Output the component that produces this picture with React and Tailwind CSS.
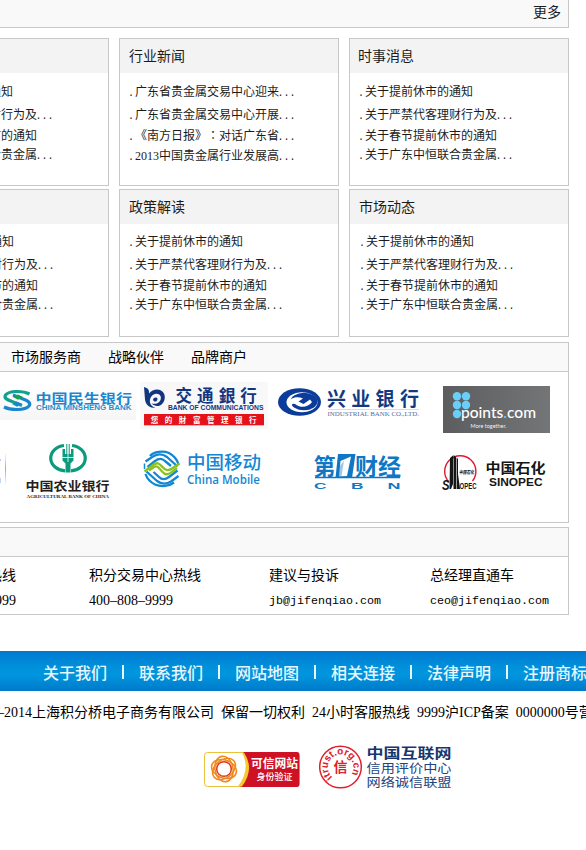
import React from "react";

const CJK = '"Liberation Sans","Noto Sans CJK SC",sans-serif';

const notices = [
  { text: "关于提前休市的通知" },
  { text: "关于严禁代客理财行为及", more: true },
  { text: "关于春节提前休市的通知" },
  { text: "关于广东中恒联合贵金属", more: true },
];

const industry = [
  { text: "广东省贵金属交易中心迎来", more: true },
  { text: "广东省贵金属交易中心开展", more: true },
  {
    text: (
      <>
        《南方日报》
        <span className="inline-block w-3 font-['Noto_Sans_CJK_TC',sans-serif]" lang="zh-Hant">：</span>
        对话广东省
      </>
    ),
    more: true,
  },
  {
    text: (
      <>
        <span className="font-['Liberation_Serif',serif]">2013</span>中国贵金属行业发展高
      </>
    ),
    more: true,
  },
];

const rowGaps = ["mt-[7px]", "mt-[3px]", "mt-px", "-mt-px"];

function Dots({ n, className = "" }) {
  return (
    <span className={`font-['Liberation_Mono',monospace] text-[10px] ${className}`}>{".".repeat(n)}</span>
  );
}

function Card({ title, items, inset, titleInset = "pl-[9px]", last = "-mt-px", up = false }) {
  return (
    <section className="h-[148px] w-[220px] shrink-0 border border-[#c8c8c8] bg-white text-[#1c1c1c]">
      <h2 className={`h-[34px] bg-[#f3f3f3] text-sm leading-[33px] ${titleInset}`}>{title}</h2>
      <ul className={`${inset} ${up ? "-mt-px" : ""} flex flex-col pt-px text-xs`}>
        {items.map((item, i) => (
          <li key={i} className={`h-5 leading-5 whitespace-nowrap ${i === 3 ? last : rowGaps[i]}`}>
            <Dots n={1} className="-ml-px mr-px" />
            {item.text}
            {item.more && <Dots n={3} className="-ml-[1.5px]" />}
          </li>
        ))}
      </ul>
    </section>
  );
}

function T({ x, y, w, size, fill, weight = 400, family = CJK, children, ...rest }) {
  return (
    <text x={x} y={y} textLength={w} lengthAdjust="spacingAndGlyphs" fontSize={size} fill={fill} fontWeight={weight} fontFamily={family} {...rest}>
      {children}
    </text>
  );
}

function Minsheng() {
  return (
    <svg className="h-[62px] w-[136px] shrink-0" viewBox="0 372 136 62">
      <defs>
        <linearGradient id="msbg" x2="0" y2="1">
          <stop stopColor="#fff" />
          <stop offset="1" stopColor="#f6f6f6" />
        </linearGradient>
      </defs>
      <rect y="382" width="136" height="38" fill="url(#msbg)" />
      <g fill="none" strokeWidth="3.2">
        <path d="M29.500 394C23 390.500 9 390.500 5.500 395C3.500 398.500 8 400 12 401.500L22 405.500" stroke="#14a08d" />
        <path d="M4 407C11 410.500 25 410.500 29 406C31.500 402.500 27 400.500 23 399L13 395" stroke="#1a86cf" />
      </g>
      <path d="M18 394.500l5 2.600-5 2.700-5-2.700z" fill="#16a34a" />
      <path d="M17 401.500l5 2.600-5 2.700-5-2.700z" fill="#1a86cf" />
      <T x="35.500" y="402.500" w="96.500" size="13" weight="700" fill="#1b87cf">中国民生银行</T>
      <T x="36" y="410.300" w="95.500" size="6.500" weight="700" fill="#2492cc">CHINA MINSHENG BANK</T>
    </svg>
  );
}

function BankCom() {
  return (
    <svg className="h-[62px] w-[136px] shrink-0" viewBox="136 372 136 62">
      <rect x="140" y="382" width="128" height="47" fill="#f8f8f8" />
      <path d="M144 387C148 388 149.500 390 149 393.500C152 390 157 388.500 161 390.500C166 393 166 401 161.500 404.500C158 407.200 154 406 151.500 403.500C155 404.500 159 403.500 160.500 400C162 396 159 392.800 155 394C151 395.200 149.500 399 150 402.500C150.500 405 152.500 407 155.500 408C149.500 408 145.500 404.500 145 399.500z" fill="#12357f" />
      <path d="M153 399.500C153.500 397 158 396.500 157.500 399.500C157 402 153.500 402.500 153 399.500z" fill="#12357f" />
      <g fill="#12357f" fontFamily={CJK} fontWeight="700" fontSize="16.500">
        {["交", "通", "銀", "行"].map((c, i) => (
          <text key={c} x={175.500 + i * 21.600} y="401.600">{c}</text>
        ))}
      </g>
      <T x="168" y="409.500" w="95.500" size="6.500" weight="700" fill="#12357f">BANK OF COMMUNICATIONS</T>
      <rect x="144" y="414" width="120" height="11.300" fill="#e3121b" />
      <g fill="#fff" fontFamily={CJK} fontWeight="700" fontSize="7.500" textAnchor="middle">
        {["您", "的", "財", "富", "管", "理", "银", "行"].map((c, i) => (
          <text key={i} x={154.500 + i * 14.050} y="422.500">{c}</text>
        ))}
      </g>
    </svg>
  );
}

function Industrial() {
  return (
    <svg className="h-[62px] w-[156px] shrink-0" viewBox="272 372 156 62">
      <ellipse cx="299.500" cy="402" rx="21.500" ry="13.800" fill="#0b3c9b" />
      <ellipse cx="302" cy="402.300" rx="15.500" ry="10" fill="#fff" />
      <ellipse cx="304" cy="401.500" rx="13.500" ry="8.700" fill="#0b3c9b" />
      <path d="M288.500 404C289 398.500 296 395.500 303 398.500L298.500 401.500L303.500 404L310 399.500L312 402C309 407 301 408.300 296.500 405C294.500 403.500 292 403 291.500 406z" fill="#fff" />
      <g fill="#14397f" fontFamily={CJK} fontWeight="600" fontSize="19">
        {["兴", "业", "银", "行"].map((c, i) => (
          <text key={c} x={327 + i * 24.300} y="405.800">{c}</text>
        ))}
      </g>
      <path d="M328 409.500H419" stroke="#c7ccd8" strokeWidth=".7" />
      <T x="327.500" y="415.700" w="91.500" size="7" fill="#536b9c" family='"Liberation Serif",serif'>INDUSTRIAL BANK CO.,LTD.</T>
    </svg>
  );
}

function Points() {
  return (
    <svg className="h-[62px] w-[140px] shrink-0" viewBox="428 372 140 62">
      <defs>
        <linearGradient id="ptbg" x2="1">
          <stop stopColor="#5c5d5f" />
          <stop offset="1" stopColor="#747577" />
        </linearGradient>
      </defs>
      <rect x="443" y="386" width="107" height="47" fill="url(#ptbg)" />
      {[[457, 396.200], [466, 396.200], [457, 405], [466, 405], [457, 414]].map(([x, y]) => (
        <circle key={x + y} cx={x} cy={y} r="4.200" fill="#69cff8" />
      ))}
      <T x="461" y="418.300" w="75" size="16" fill="#fff" weight="500" family="Lato,Inter,sans-serif">
        points<tspan fill="#69cff8">.</tspan>com
      </T>
      <T x="470.500" y="427.500" w="36" size="5.500" fill="#f0f0f0" family="Lato,Inter,sans-serif">More together.</T>
    </svg>
  );
}

function Agricultural() {
  return (
    <svg className="h-[88px] w-[136px] shrink-0" viewBox="0 434 136 88">
      <defs>
        <linearGradient id="edge" x2="0" y2="1">
          <stop stopColor="#fff" />
          <stop offset=".5" stopColor="#aaa" />
          <stop offset="1" stopColor="#fff" />
        </linearGradient>
      </defs>
      <rect x="5" y="452" width="1" height="34" fill="url(#edge)" />
      <rect y="459" width="1" height="2" fill="#b9cff2" />
      <rect y="478" width="1" height="5" fill="#c3d6f5" />
      <path d="M64 445.500A15 12.700 0 0 0 65 470.800M72 445.500A15 12.700 0 0 1 71 470.800" fill="none" stroke="#0a9b7c" strokeWidth="3.200" />
      <path d="M66.300 444H67.500V454H66.300zM68.500 444H69.700V454H68.500zM62.500 449H65V454H62.500zM71 449H73.500V454H71zM62.500 454H73.500V460.500L70.500 463.500V472.500H65.500V463.500L62.500 460.500z" fill="#0a9b7c" />
      <path d="M68 444V462M62 457.500H74" stroke="#fff" strokeWidth=".8" />
      <T x="25.500" y="490.500" w="84" size="12.500" weight="700" fill="#231f20">中国农业银行</T>
      <T x="26.500" y="497.800" w="82.500" size="4.800" weight="700" fill="#231f20" family='"Liberation Serif",serif'>AGRICULTURAL BANK OF CHINA</T>
    </svg>
  );
}

function ChinaMobile() {
  return (
    <svg className="h-[88px] w-[136px] shrink-0" viewBox="136 434 136 88">
      <g fill="none" strokeWidth="2.300" strokeLinejoin="round">
        <g stroke="#1287d4">
          <path d="M150 456C154 451.500 163 450.500 169 453C173.500 455.500 177 459.500 178.500 464" />
          <path d="M145.500 461.500L153 456.500C158 453.500 163 454 167 457L177.500 466.500" />
          <path d="M147.500 467L155 461C159 458 162 458 165 461L171 466" />
          <path d="M144.500 463.500V469" strokeWidth="1.500" />
          <path d="M177.500 470.500L169 477C165 480 162 480 159 477L153.500 472" />
          <path d="M178.500 476L171 481.500C166 484.500 161 484 157 481L146.500 471.500" />
          <path d="M174 482.500C169 486.500 161 487 155 484.500C150 482 147 478.500 145.500 474" />
        </g>
        <path d="M144.500 471.500L153 465C157 462 159 463 162 466.500C166 471 168 471 172 468.500L179.500 463.500" stroke="#8bc21f" strokeWidth="2.400" />
        <path d="M149 470.500L154 467C157 465 159 468 162 471.500C165 475 168 475 171 472.500L177 468" stroke="#8bc21f" strokeWidth="2.200" />
      </g>
      <T x="187" y="468.800" w="74" size="18" weight="500" fill="#1287d4">中国移动</T>
      <T x="187" y="483.500" w="73" size="13" weight="600" fill="#1287d4" family='"Open Sans",sans-serif'>China Mobile</T>
    </svg>
  );
}

function Cbn() {
  return (
    <svg className="h-[88px] w-[156px] shrink-0" viewBox="272 434 156 88">
      <g fill="#1077c4" fontFamily={CJK} fontWeight="700">
        <text x="313.500" y="475" fontSize="23" textLength="22" lengthAdjust="spacingAndGlyphs">第</text>
        <text x="355" y="475" fontSize="23" textLength="46" lengthAdjust="spacingAndGlyphs">财经</text>
      </g>
      <path d="M338 454H355.500L352 478H335.500z" fill="#1077c4" />
      <path d="M340.500 461L351 456.500L347 476L339 476.500z" fill="#fff" />
      <path d="M340 466L344 460.500L341.500 476.500H338.500z" fill="#1077c4" opacity=".4" />
      <path d="M315 477.500H352M352 477.500H400" stroke="#1077c4" strokeWidth="1.600" />
      <T x="314" y="488.800" w="12.500" size="9.500" weight="700" fill="#1077c4">C</T>
      <T x="351" y="488.800" w="12.500" size="9.500" weight="700" fill="#1077c4">B</T>
      <T x="387.500" y="488.800" w="13" size="9.500" weight="700" fill="#1077c4">N</T>
    </svg>
  );
}

function Sinopec() {
  return (
    <svg className="h-[88px] w-[140px] shrink-0" viewBox="428 434 140 88">
      <path d="M448.500 481.500A15.600 15.600 0 1 1 472.500 481" fill="none" stroke="#e3182d" strokeWidth="1.400" />
      <g fill="#151515">
        <path d="M450 458L453 455.500V484L451 489H449.500z" />
        <path d="M453.500 455L456 457V489H453.500z" />
        <path d="M456.600 457.500L458 459V474L460 489H456.600z" />
        <T x="442" y="489.500" w="7.500" size="14" weight="700" fill="#151515" fontStyle="italic">S</T>
        <T x="459.500" y="489" w="17" size="9" weight="700" fill="#151515">OPEC</T>
        <T x="459" y="473.500" w="15" size="5" weight="600" fill="#151515" fontStyle="italic">中国石化</T>
        <T x="485.500" y="472.500" w="60" size="13.500" weight="700" fill="#151515">中国石化</T>
        <T x="489" y="485.600" w="53.500" size="11.800" weight="700" fill="#151515">SINOPEC</T>
      </g>
    </svg>
  );
}

function TrustedSite() {
  return (
    <svg className="mt-1.5 h-9 w-24" viewBox="204 752 96 36">
      <rect x="204.500" y="752.500" width="94.500" height="34" rx="3" fill="#fff" stroke="#e9c13d" />
      <path d="M243 752H297Q299.500 752 299.500 755V784Q299.500 787 297 787H240Q254 769 243 752z" fill="#cf1126" />
      <path d="M242 752.500H244Q255 769 242 786.500H238Q251 769 242 752.500z" fill="#f5c92c" />
      <g fill="none" strokeWidth="1.600">
        {[0, 60, 120].map((a) => (
          <ellipse key={a} cx="224" cy="769" rx="12.800" ry="9" stroke="#f08a1f" transform={`rotate(${a + 20} 224 769)`} />
        ))}
        <circle cx="224" cy="769" r="7.300" stroke="#dd3b1c" strokeWidth="1.500" />
      </g>
      <T x="251" y="767.800" w="47" size="12" weight="700" fill="#fff">可信网站</T>
      <T x="256.500" y="779.500" w="36" size="9" weight="500" fill="#fff">身份验证</T>
    </svg>
  );
}

function Itrust() {
  return (
    <svg className="h-[46px] w-[134px]" viewBox="319 744 134 46">
      <circle cx="340.500" cy="767" r="20.800" fill="#fff" stroke="#e0202c" strokeWidth="1.500" />
      <defs>
        <path id="ring" d="M332.500 777.200A12.800 12.800 0 1 1 350.500 775.500" />
      </defs>
      <text fontSize="10" fontWeight="700" fill="#e0202c" fontFamily='"Liberation Sans",sans-serif'>
        <textPath href="#ring">itrust.org.cn</textPath>
      </text>
      <T x="333.500" y="771.800" w="14" size="14" weight="700" fill="#e0202c">信</T>
      <T x="366.500" y="758" w="85" size="13.500" weight="700" fill="#17366f">中国互联网</T>
      <T x="366.500" y="773" w="85" size="12.500" fill="#23457f">信用评价中心</T>
      <T x="366.500" y="786.500" w="85" size="12.500" fill="#23457f">网络诚信联盟</T>
    </svg>
  );
}

const mono = "font-['Liberation_Mono',monospace] text-[11.67px]";
const serif = "font-['Liberation_Serif','Noto_Sans_CJK_SC',serif] text-sm";
const contacts = [
  { title: "全国服务热线", value: "400-808-9999", phone: true, width: "w-[157px]" },
  { title: "积分交易中心热线", value: "400-808-9999", phone: true, width: "w-[180px]" },
  { title: "建议与投诉", value: "jb@jifenqiao.com", width: "w-[161px]" },
  { title: "总经理直通车", value: "ceo@jifenqiao.com", width: "w-[130px]" },
];

function Digits({ value }) {
  return value.split("-").map((part, i) => (
    <React.Fragment key={i}>
      {i > 0 && <span className="inline-block w-[7px] text-center">–</span>}
      {part}
    </React.Fragment>
  ));
}

export default function App() {
  return (
    <main className="h-[850px] w-[586px] overflow-hidden bg-white font-['Noto_Sans_CJK_SC',sans-serif] text-black">
      <div className="flex h-7 w-[569px] justify-end border-r border-b border-[#c8c8c8] bg-[#f9f9f9] pr-[7px] text-sm leading-[23px] text-[#1c1c1c]">
        更多
      </div>

      <div className="mt-2.5 -ml-[111px] flex gap-2.5">
        <Card title="公告通知" items={notices} inset="pl-[9px]" />
        <Card title="行业新闻" items={industry} inset="pl-[9px]" last="mt-0" />
        <Card title="时事消息" items={notices} inset="pl-[9px]" titleInset="pl-2" />
      </div>
      <div className="mt-[3px] -ml-[111px] flex gap-2.5">
        <Card title="交易公告" items={notices} inset="pl-2.5" up />
        <Card title="政策解读" items={notices} inset="pl-[9px]" up />
        <Card title="市场动态" items={notices} inset="pl-2.5" up />
      </div>

      <section className="mt-[5px] h-[181px] w-[569px] border-y border-r border-[#c8c8c8]">
        <div className="flex h-[29px] gap-[27px] border-b border-[#c8c8c8] bg-[#f9f9f9] pl-[11px] text-sm leading-[26px]">
          <span className="w-[70px]">市场服务商</span>
          <span>战略伙伴</span>
          <span>品牌商户</span>
        </div>
        <div className="flex">
          <Minsheng />
          <BankCom />
          <Industrial />
          <Points />
        </div>
        <div className="flex">
          <Agricultural />
          <ChinaMobile />
          <Cbn />
          <Sinopec />
        </div>
      </section>

      <section className="mt-1 h-[88px] w-[569px] border-y border-r border-[#c8c8c8]">
        <div className="h-[29px] border-b border-[#c8c8c8] bg-[#f9f9f9]" />
        <div className="-ml-[68px] flex">
          {contacts.map((c) => (
            <div key={c.title} className={`${c.width} shrink-0 pt-1 whitespace-nowrap`}>
              <div className="h-7 text-sm leading-[27px]">{c.title}</div>
              <div className={`h-6 leading-6 ${c.phone ? serif : mono}`}>
                {c.phone ? <Digits value={c.value} /> : c.value}
              </div>
            </div>
          ))}
        </div>
      </section>

      <nav className="mt-9 flex h-10 items-center bg-[linear-gradient(#0079d0,#0093dc_45%,#0095de_60%,#007acb)] pt-px pl-[43px] text-base font-medium whitespace-nowrap text-[#e8f6ff]">
        {["关于我们", "联系我们", "网站地图", "相关连接", "法律声明", "注册商标"].map((label, i) => (
          <React.Fragment key={label}>
            {i > 0 && <span className="mx-[15px] h-[14px] w-0.5 shrink-0 bg-[#e8f6ff]" />}
            <span className="w-16 shrink-0">{label}</span>
          </React.Fragment>
        ))}
      </nav>

      <p className={`-ml-[31px] h-[42px] pt-px leading-[42px] whitespace-nowrap [word-spacing:3.5px] ${serif}`}>
        <Digits value="2013-2014上海积分桥电子商务有限公司 保留一切权利 24小时客服热线 9999沪ICP备案 0000000号营业执照" />
      </p>

      <div className="mt-[11px] flex items-center gap-[19px] pl-[204px]">
        <TrustedSite />
        <Itrust />
      </div>
    </main>
  );
}
